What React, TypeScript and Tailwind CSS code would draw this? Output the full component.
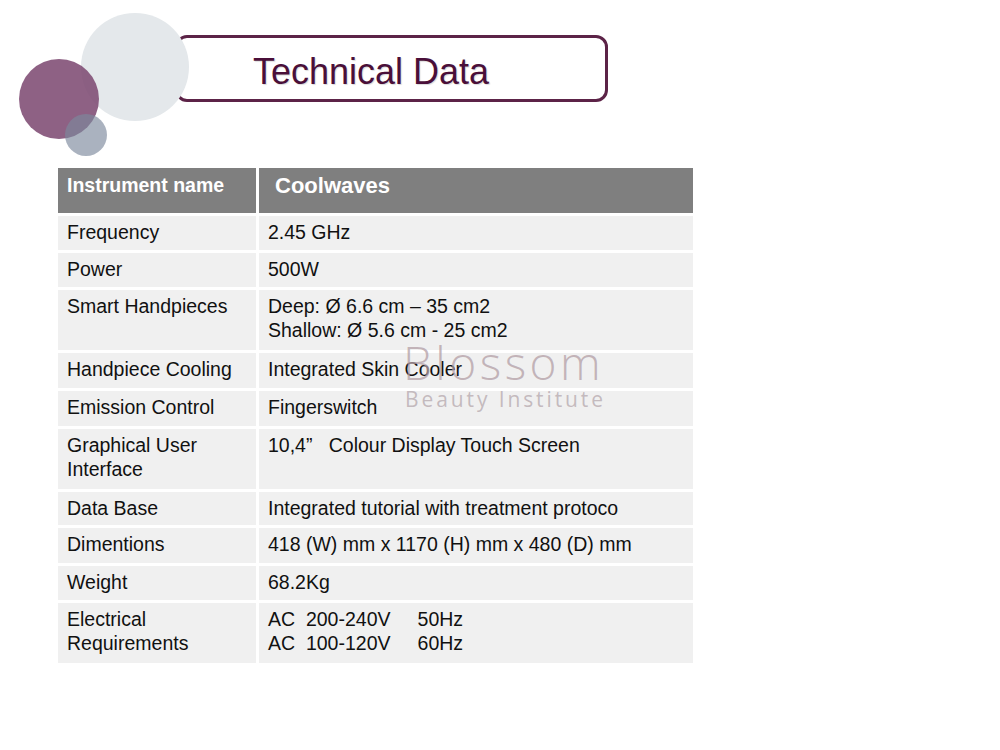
import React from 'react';

// Rows of the spec table, h = row height in px
const rows = [
  { label: ['Frequency'], value: ['2.45 GHz'], h: 34 },
  { label: ['Power'], value: ['500W'], h: 34 },
  { label: ['Smart Handpieces'], value: ['Deep: Ø 6.6 cm – 35 cm2', 'Shallow: Ø 5.6 cm - 25 cm2'], h: 60 },
  { label: ['Handpiece Cooling'], value: ['Integrated Skin Cooler'], h: 35 },
  { label: ['Emission Control'], value: ['Fingerswitch'], h: 35 },
  { label: ['Graphical User', 'Interface'], value: ['10,4”   Colour Display Touch Screen'], h: 60 },
  { label: ['Data Base'], value: ['Integrated tutorial with treatment protoco'], h: 33 },
  { label: ['Dimentions'], value: ['418 (W) mm x 1170 (H) mm x 480 (D) mm'], h: 35 },
  { label: ['Weight'], value: ['68.2Kg'], h: 34 },
  { label: ['Electrical', 'Requirements'], value: ['AC  200-240V     50Hz', 'AC  100-120V     60Hz'], h: 60 },
];

const App: React.FC = () => {
  return (
    <div
      className="relative w-[1000px] h-[750px] bg-white overflow-hidden"
      style={{ fontFamily: '"Liberation Sans", Arial, sans-serif' }}
    >
      {/* Title banner */}
      <div className="ml-[175px] mt-[35px] w-[433px] h-[67px] rounded-[12px] border-[3px] border-[#5c2347] flex items-center pl-[75px] pt-[6px]">
        <h1 className="text-[36px] leading-none text-[#4a0f39] [text-shadow:1px_1px_1px_rgba(0,0,0,0.15)]">
          Technical Data
        </h1>
      </div>

      {/* Decorative circles */}
      <div className="absolute left-[81px] top-[13px] w-[108px] h-[108px] rounded-full bg-[#e4e8eb]" />
      <div className="absolute left-[19px] top-[59px] w-[80px] h-[80px] rounded-full bg-[#7e4b73] opacity-[0.88]" />
      <div className="absolute left-[65px] top-[114px] w-[42px] h-[42px] rounded-full bg-[#7c889d] opacity-[0.65]" />

      {/* Spec table */}
      <div className="ml-[58px] mt-[66px] w-[635px] flex flex-col gap-[3px] text-[19.5px] leading-[24px] text-[#111]">
        <div className="grid grid-cols-[198px_434px] gap-[3px] h-[45px]">
          <div className="bg-[#7f7f7f] text-white font-bold pl-[9px] pt-[5px]">Instrument name</div>
          <div className="bg-[#7f7f7f] text-white font-bold text-[22px] pl-[16px] pt-[6px]">Coolwaves</div>
        </div>
        {rows.map((r) => (
          <div key={r.label.join(' ')} className="grid grid-cols-[198px_434px] gap-[3px]" style={{ height: r.h }}>
            <div className="bg-[#f0f0f0] pl-[9px] pt-[4px]">
              {r.label.map((l) => (
                <div key={l}>{l}</div>
              ))}
            </div>
            <div className="bg-[#f0f0f0] pl-[9px] pt-[4px] whitespace-pre">
              {r.value.map((v) => (
                <div key={v}>{v}</div>
              ))}
            </div>
          </div>
        ))}
      </div>

      {/* Watermark */}
      <div
        className="absolute left-[403px] top-[336px] pointer-events-none flex flex-col items-start"
        style={{ fontFamily: '"Open Sans", sans-serif' }}
      >
        <span className="text-[46px] leading-[52px] tracking-[3.5px] text-[#b39fa6]/75 font-light">Blossom</span>
        <span className="text-[21px] leading-[22px] tracking-[2.9px] text-[#b8acb0]/80 pl-[2px]">Beauty Institute</span>
      </div>
    </div>
  );
};

export default App;
